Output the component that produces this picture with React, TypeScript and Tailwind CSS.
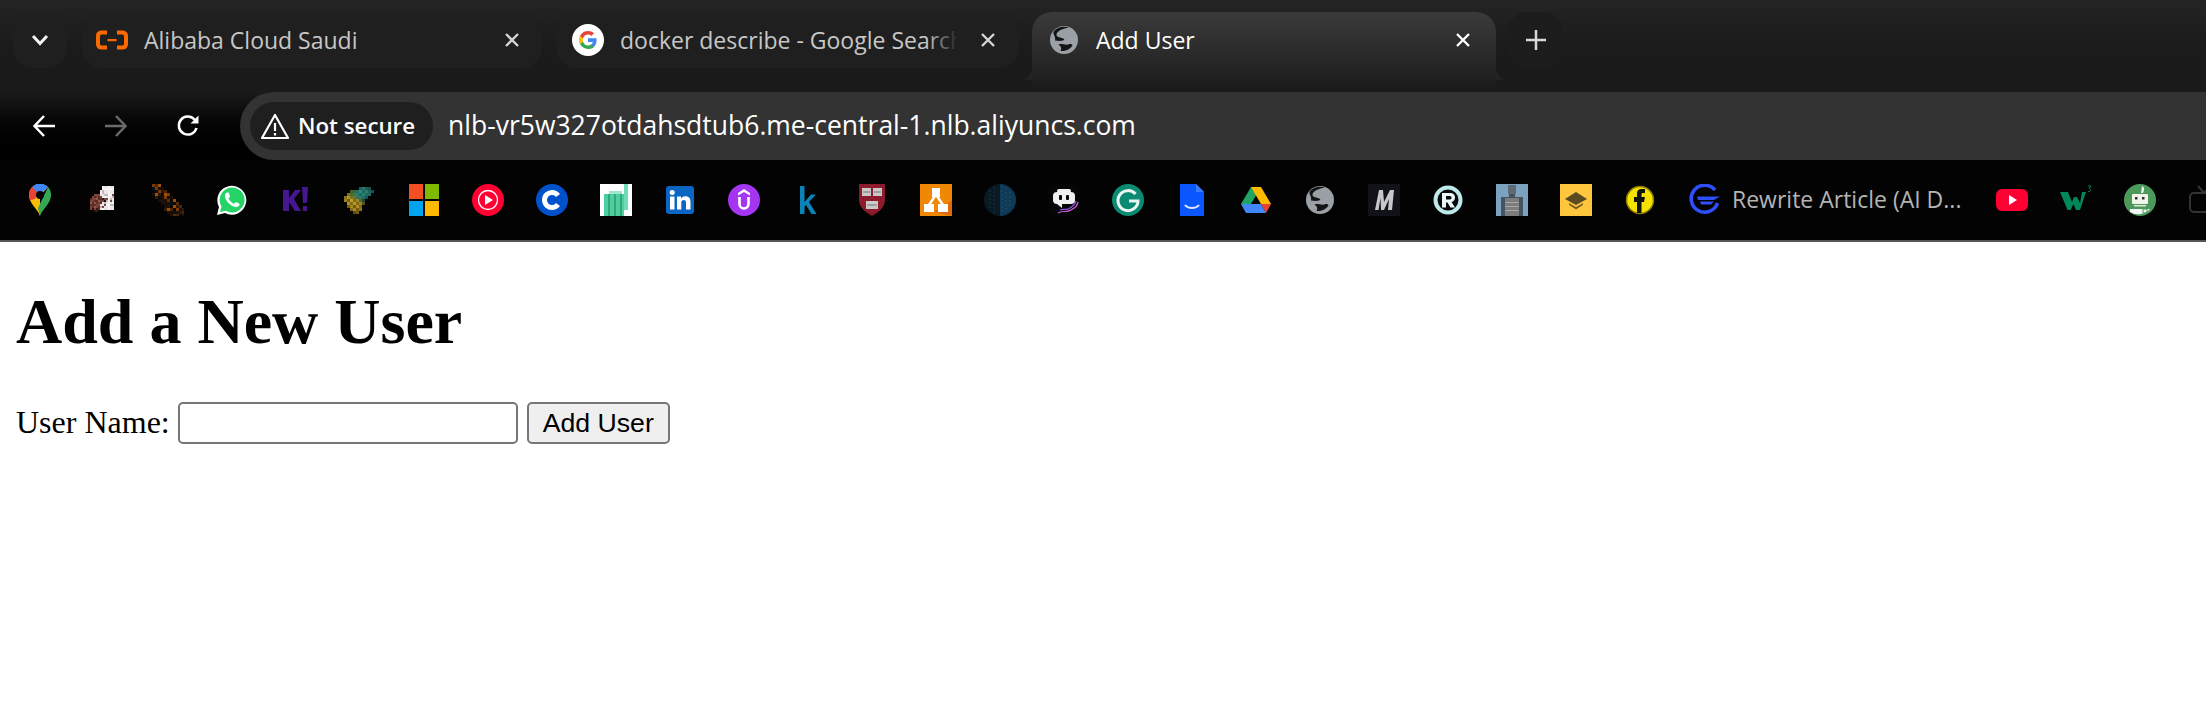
import React from "react";

const ui = { fontFamily: '"Open Sans", "Noto Sans", sans-serif' };

function Close({ color = "#d4d4d4" }: { color?: string }) {
  return (
    <svg width="16" height="16" viewBox="0 0 16 16" className="shrink-0">
      <path d="M2 2 L14 14 M14 2 L2 14" stroke={color} strokeWidth="2.4" fill="none" />
    </svg>
  );
}

function Globe({ size = 28 }: { size?: number }) {
  return (
    <svg width={size} height={size} viewBox="0 0 28 28" className="shrink-0">
      <circle cx="14" cy="14" r="14" fill="#9aa0a6" />
      <path d="M19 1.500 C13 2.500 7 5 6.500 8.500 C6.200 12 12 11 14 13 C15.500 14.500 11 15.500 5 14.500 C6 10 3 9 3.500 6 C6 2 12 -0.500 19 1.500 Z" fill="#141414" />
      <path d="M8.500 18.500 C12 17 15 19.500 18 18.500 C21 17.500 22 18.500 22.500 19.500 C20 23.500 15 25.500 10.500 25 C11.500 23 12 21 8.500 18.500 Z" fill="#141414" />
    </svg>
  );
}

function GoogleG({ size = 32 }: { size?: number }) {
  return (
    <svg width={size} height={size} viewBox="0 0 32 32" className="shrink-0">
      <circle cx="16" cy="16" r="16" fill="#fff" />
      <path d="M24.6 16.2c0-.7-.1-1.3-.2-1.9H16v3.6h4.8c-.2 1.1-.8 2.1-1.8 2.7v2.3h2.9c1.7-1.6 2.7-3.9 2.7-6.7z" fill="#4285F4" />
      <path d="M16 25c2.4 0 4.4-.8 5.9-2.1L19 20.6c-.8.5-1.8.9-3 .9-2.3 0-4.3-1.6-5-3.7H8v2.3C9.5 23 12.5 25 16 25z" fill="#34A853" />
      <path d="M11 17.8c-.2-.5-.3-1.1-.3-1.8s.1-1.2.3-1.8v-2.3H8C7.400 13.100 7 14.500 7 16s.4 2.900 1 4.100l3-2.300z" fill="#FBBC05" />
      <path d="M16 10.600c1.300 0 2.500.5 3.400 1.300l2.600-2.600C20.400 7.900 18.400 7 16 7c-3.500 0-6.500 2-8 4.900l3 2.300c.7-2 2.700-3.600 5-3.600z" fill="#EA4335" />
    </svg>
  );
}

function Alibaba() {
  return (
    <svg width="32" height="20" viewBox="0 0 32 20" className="shrink-0">
      <path d="M11 2.500 H6 Q2 2.500 2 6 V14 Q2 17.500 6 17.500 H11 M21 2.500 H26 Q30 2.500 30 6 V14 Q30 17.500 26 17.500 H21" fill="none" stroke="#ff6a00" strokeWidth="4" />
      <rect x="11.500" y="9" width="9" height="2.200" fill="#ff6a00" />
    </svg>
  );
}

function Px({ cells, size = 32, step = 3 }: { cells: [number, number, string][]; size?: number; step?: number }) {
  return (
    <svg width={size} height={size} viewBox="0 0 32 32" shapeRendering="crispEdges">
      {cells.map(([x, y, c], i) => (
        <rect key={i} x={x} y={y} width={step} height={step} fill={c} />
      ))}
    </svg>
  );
}

const I = ({ children }: { children: React.ReactNode }) => (
  <svg width="32" height="32" viewBox="0 0 32 32">{children}</svg>
);

const maps = (
  <I>
    <path d="M16 32 C14 25 5 20 5 11 A11 11 0 0 1 16 0 L24 3 L16 12Z" fill="#fbbc04" />
    <path d="M8 3 A11 11 0 0 1 24 3 L18 9 H13Z" fill="#4285f4" />
    <path d="M5 11 A11 11 0 0 1 8 3 L14 9 L11 15 L6 16Z" fill="#ea4335" />
    <path d="M24 3 A11 11 0 0 1 27 11 C27 20 18 25 16 32 L14 24 Z" fill="#34a853" />
    <circle cx="16" cy="11" r="4" fill="#050505" />
  </I>
);

const brownCells: [number, number, string][] = [];
for (let y = 2; y < 26; y += 2) {
  for (let x = 2; x < 28; x += 2) {
    const h = (x * 7 + y * 13 + x * y) % 11;
    const inWhite = x >= 12 + Math.max(0, 6 - y) * 0.5 && x < 26 && y < 26;
    const inBrown = x + y * 0.4 >= 7 && x < 18 && y >= 10 && x + y >= 16;
    if (inWhite && !(x < 18 && y > 12 && x + y < 32)) {
      const c = h < 6 ? "#ece6e6" : h < 8 ? "#c9b7b7" : h < 10 ? "#f7f5f5" : "#6e4a46";
      brownCells.push([x, y, c]);
    } else if (inBrown) {
      const c = h < 4 ? "#7d4238" : h < 8 ? "#5c2e26" : "#93594d";
      brownCells.push([x, y, c]);
    }
  }
}
brownCells.push([6, 26, "#2a1410"], [8, 26, "#3a1c16"], [4, 24, "#2a1410"], [8, 24, "#3a1c16"], [14, 14, "#332020"], [16, 16, "#1c1414"]);
const brownPic = <Px step={2} cells={brownCells} />;

const orangeCells: [number, number, string][] = [];
for (let y = 0; y < 33; y += 3) {
  const left = Math.max(0, (y - 6) * 0.8);
  const right = Math.min(33, 9 + y * 0.95);
  for (let x = Math.floor(left / 3) * 3; x < right; x += 3) {
    const h = (((x * 73) ^ (y * 151)) * 31) % 11;
    const c = ["#7a3a08", "#1c0e04", "#4a2406", "#0c0804", "#a0500a", "#18140c", "#301804", "#0a101a", "#5c2c06", "#0c0804", "#1c0e04"][h];
    orangeCells.push([x, y, c]);
  }
}
const orangePic = <Px step={3} cells={orangeCells} />;

const whatsapp = (
  <I>
    <path d="M1 31 L3 23 A14.500 14.500 0 1 1 9 29 Z" fill="#fff" />
    <path d="M4 28 L5.500 22.500 A12.500 12.500 0 1 1 10 26.800 Z" fill="#25d366" />
    <path d="M11 8.500 C9.500 9 8.500 11 9 13 C10 17.500 14.500 22 19.500 23 C21.500 23.300 23.500 22 23.800 20 L20 18 L18 19.800 C15.500 18.800 13.500 16.800 12.500 14.300 L14.200 12.500 L12.500 8.500 Z" fill="#fff" />
  </I>
);

const kahoot = (
  <I>
    <path d="M3 6 H9 V14 L15 6 H21 L14 15 L21 27 H15 L9 18 V27 H3 Z" fill="#46178f" />
    <path d="M22 3 H28 L27 19 H23 Z M23 22 H27 V27 H23 Z" fill="#46178f" />
  </I>
);

const pineapple = (
  <Px step={3} cells={[
    [15,3,"#1b5f5a"],[18,3,"#2a7a70"],[21,3,"#1c5c58"],[24,3,"#1a5550"],
    [6,6,"#405f20"],[9,6,"#2a6a55"],[12,6,"#246a60"],[15,6,"#2c8a7a"],[18,6,"#1f6a60"],[21,6,"#2a8070"],[24,6,"#1e6055"],[27,6,"#17504a"],
    [3,9,"#7a7020"],[6,9,"#506a28"],[9,9,"#3a7a50"],[12,9,"#2a7a68"],[15,9,"#1f6a60"],[18,9,"#2a8070"],[21,9,"#1f6a60"],[24,9,"#226a60"],
    [0,12,"#8a7018"],[3,12,"#b09028"],[6,12,"#7a7020"],[9,12,"#6a7a30"],[12,12,"#3a7050"],[15,12,"#2a7a68"],[18,12,"#1f6a60"],[21,12,"#1a5550"],
    [0,15,"#a08020"],[3,15,"#705a10"],[6,15,"#c0a030"],[9,15,"#806a18"],[12,15,"#a08828"],[15,15,"#4a6a30"],[18,15,"#204a40"],
    [3,18,"#b09028"],[6,18,"#806a18"],[9,18,"#b89828"],[12,18,"#806a18"],[15,18,"#a08020"],[18,18,"#5a5010"],
    [3,21,"#705a10"],[6,21,"#a88a20"],[9,21,"#705a10"],[12,21,"#b09028"],[15,21,"#806a18"],
    [6,24,"#806a18"],[9,24,"#a88a20"],[12,24,"#705a10"],[15,24,"#907818"],
    [9,27,"#604e10"],[12,27,"#705a10"],
  ]} />
);

const microsoft = (
  <svg width="32" height="32" viewBox="0 0 32 32" shapeRendering="crispEdges">
    <rect x="1" y="0" width="14" height="15" fill="#f25022" />
    <rect x="17" y="0" width="14" height="15" fill="#7fba00" />
    <rect x="1" y="17" width="14" height="15" fill="#00a4ef" />
    <rect x="17" y="17" width="14" height="15" fill="#ffb900" />
  </svg>
);

const ytMusic = (
  <I>
    <circle cx="16" cy="16" r="16" fill="#ff0033" />
    <circle cx="16" cy="16" r="9.500" fill="none" stroke="#fff" strokeWidth="1.300" />
    <path d="M13 11 L21 16 L13 21 Z" fill="#fff" />
  </I>
);

const cIcon = (
  <I>
    <circle cx="16" cy="16" r="16" fill="#0052cc" />
    <path d="M22 11.500 A7.500 7.500 0 1 0 22 20.500" fill="none" stroke="#fff" strokeWidth="5" />
  </I>
);

const greenDoc = (
  <svg width="32" height="32" viewBox="0 0 32 32" shapeRendering="crispEdges">
    <rect width="32" height="32" fill="#fff" />
    <rect x="4" y="10" width="20" height="22" fill="#4fcf9f" />
    <rect x="8" y="10" width="2" height="22" fill="#2fa87a" />
    <rect x="14" y="10" width="2" height="22" fill="#2fa87a" />
    <rect x="20" y="10" width="2" height="22" fill="#2fa87a" />
    <rect x="9" y="7" width="13" height="3" fill="#9fe6cb" />
    <rect x="24" y="0" width="4" height="26" fill="#6fdcb4" />
  </svg>
);

const linkedin = (
  <I>
    <rect x="2" y="2" width="28" height="28" rx="3" fill="#0a66c2" />
    <rect x="6" y="12.500" width="4.500" height="13" fill="#fff" />
    <circle cx="8.200" cy="8.500" r="2.500" fill="#fff" />
    <path d="M13 12.500 H17 V14.500 C18 13 19.500 12.200 21.500 12.200 C25 12.200 26.500 14.500 26.500 18 V25.500 H22 V18.800 C22 17 21.300 16 19.800 16 C18.200 16 17.300 17 17.300 18.800 V25.500 H13 Z" fill="#fff" />
  </I>
);

const udemy = (
  <I>
    <circle cx="16" cy="16" r="16" fill="#a435f0" />
    <path d="M10 9 L16 5 L22 9 V11.500 L16 8 L10 11.500 Z" fill="#fff" />
    <path d="M11.500 13 V20 A4.500 4.500 0 0 0 20.500 20 V13" fill="none" stroke="#fff" strokeWidth="2.600" />
  </I>
);

const kIcon = (
  <I>
    <path d="M8 2 H12.500 V18 L19 10.500 H24 L17 18 L24.500 30 H19.500 L14 21 L12.500 22.500 V30 H8 Z" fill="#0a84b8" />
  </I>
);

const harvard = (
  <I>
    <path d="M3 0 H29 V16 C29 24 21 29 16 32 C11 29 3 24 3 16 Z" fill="#8c1c2c" />
    <rect x="6" y="4" width="9" height="8" fill="#c9c9c9" />
    <rect x="17" y="4" width="9" height="8" fill="#c9c9c9" />
    <rect x="10" y="17" width="12" height="8" fill="#c9c9c9" />
    <rect x="7" y="7.500" width="7" height="1" fill="#777" />
    <rect x="18" y="7.500" width="7" height="1" fill="#777" />
    <rect x="11" y="20.500" width="10" height="1" fill="#777" />
  </I>
);

const drawio = (
  <svg width="32" height="32" viewBox="0 0 32 32">
    <rect width="32" height="32" fill="#f08705" />
    <path d="M14 28 L32 32 V16 Z" fill="#df6c0c" />
    <rect x="12" y="4" width="8" height="9" fill="#fff" />
    <rect x="4" y="20" width="10" height="8" fill="#fff" />
    <rect x="18" y="20" width="10" height="8" fill="#fff" />
    <path d="M15 12 L9 21 M17 12 L23 21" stroke="#fff" strokeWidth="2.500" />
  </svg>
);

const darkBall = (
  <svg width="32" height="32" viewBox="0 0 32 32">
    <circle cx="16" cy="16" r="16" fill="#0a1a24" />
    <path d="M16 0 A16 16 0 0 1 16 32 Z" fill="#0f3a55" />
    <path d="M22 4 V28 M26 8 V24 M18 2 V30" stroke="#1c5576" strokeWidth="1" strokeDasharray="2 2" />
    <path d="M6 6 V26 M10 3 V29" stroke="#123040" strokeWidth="1" strokeDasharray="2 2" />
  </svg>
);

const robot = (
  <svg width="32" height="32" viewBox="0 0 32 32">
    <rect width="32" height="32" rx="7" fill="#060608" />
    <path d="M12 26 C16 24 18 27 22 24 S27 21 28 17" fill="none" stroke="#8a4fd8" strokeWidth="1.300" />
    <path d="M10 29 C15 26 18 29 23 26 S29 22 30 18" fill="none" stroke="#d46ae0" strokeWidth="1.100" />
    <rect x="5" y="8" width="22" height="12" rx="4" fill="#f0f0f0" />
    <rect x="9" y="5" width="14" height="4" rx="2" fill="#f0f0f0" />
    <path d="M9 20 H14 V24 Z" fill="#f0f0f0" />
    <rect x="11" y="11" width="3" height="5" rx="1" fill="#060608" />
    <rect x="18" y="11" width="3" height="5" rx="1" fill="#060608" />
  </svg>
);

const grammarly = (
  <I>
    <circle cx="16" cy="16" r="16" fill="#0b8a72" />
    <path d="M23.500 10 A10 10 0 1 0 26 17 H17" fill="none" stroke="#e8f5f2" strokeWidth="3" />
  </I>
);

const blueDoc = (
  <I>
    <path d="M4 0 H20 L28 8 V32 H4 Z" fill="#0b57ff" />
    <path d="M20 0 L28 8 H20 Z" fill="#3b7bff" />
    <path d="M9 21 C12 25 20 25 23 21" fill="none" stroke="#dbe6ff" strokeWidth="2" />
  </I>
);

const drive = (
  <I>
    <path d="M11 3 H21 L11 20 L6 28 L1 20 Z" fill="#1fa463" />
    <path d="M11 3 H21 L31 20 H21 Z" fill="#ffba00" />
    <path d="M1 20 H21 L26 29 H6 Z" fill="#4285f4" />
    <path d="M31 20 L26 29 L21 20 Z" fill="#ea4335" />
  </I>
);

const mIcon = (
  <svg width="32" height="32" viewBox="0 0 32 32">
    <rect width="32" height="32" fill="#12121a" />
    <path d="M7 26 L11 6 H15 L16 18 L22 6 H26 L24 26 H20 L21 15 L16 26 H13 L12.500 14 L10.500 26 Z" fill="#c8c8c8" />
  </svg>
);

const rIcon = (
  <I>
    <circle cx="16" cy="16" r="12.500" fill="#0a0a0a" stroke="#bfeaec" strokeWidth="4" />
    <path d="M10 9 H18 C22 9 23 11.500 23 13.500 C23 16 21.500 17.500 19.500 18 L23 23.500 H18.500 L15.500 18.500 H14 V23.500 H10 Z M14 12 V15.500 H18 C19 15.500 19.500 14.800 19.500 13.800 C19.500 12.800 19 12 18 12 Z" fill="#e8f8f8" />
  </I>
);

const photo = (
  <svg width="32" height="32" viewBox="0 0 32 32" shapeRendering="crispEdges">
    <rect width="32" height="32" fill="#7ba3c0" />
    <rect x="12" y="1" width="8" height="9" fill="#5e6b74" />
    <rect x="13" y="10" width="6" height="3" fill="#4a4f54" />
    <rect x="5" y="13" width="22" height="19" fill="#45545f" />
    <rect x="9" y="14" width="14" height="18" fill="#7c7c7c" />
    <rect x="9" y="18" width="14" height="1" fill="#a8a8a8" />
    <rect x="9" y="22" width="14" height="1" fill="#a8a8a8" />
    <rect x="9" y="26" width="14" height="1" fill="#a8a8a8" />
  </svg>
);

const yellowBox = (
  <svg width="32" height="32" viewBox="0 0 32 32">
    <rect width="32" height="32" fill="#ffc53d" />
    <path d="M16 8 L27 15 L16 21 L5 15 Z" fill="#5a4a20" />
    <path d="M9 19 L16 23 L23 19 V21 L16 25.500 L9 21 Z" fill="#7a6420" />
  </svg>
);

const fbYellow = (
  <I>
    <circle cx="16" cy="16" r="13.500" fill="#f5e200" stroke="#8c7c00" strokeWidth="1.500" />
    <path d="M13 29 V18 H10 V13 H13 V10 C13 6 15 5 18 5 H21 V9 H19 C18 9 17.500 9.500 17.500 10.500 V13 H21 L20 18 H17.500 V29 Z" fill="#111" />
  </I>
);

const blueG = (
  <I>
    <path d="M27 6 A13.500 13.500 0 1 0 29.500 19" fill="none" stroke="#2f4fff" strokeWidth="3.600" />
    <path d="M9 12.500 H32 L26 16 H10 Z M12 17.500 H26 L23 20.500 H13 Z" fill="#2f4fff" />
  </I>
);

const youtube = (
  <svg width="32" height="32" viewBox="0 0 32 32">
    <rect x="0" y="5" width="32" height="22" rx="6" fill="#ff0033" />
    <path d="M13 11 L21 16 L13 21 Z" fill="#fff" />
  </svg>
);

const w3 = (
  <svg width="32" height="32" viewBox="0 0 32 32">
    <path d="M0 8 H8 L12 18 L14 13 H17 L20 19 L22 8 H26 L20 26 H16 L13.500 20 L10.500 26 H7.500 Z" fill="#00875a" />
    <path d="M28 2 H31 L29 4.500 C31.500 4.500 31.500 8 28 7.500" fill="none" stroke="#00875a" strokeWidth="0.900" />
  </svg>
);

const greenBot = (
  <I>
    <circle cx="16" cy="16" r="16" fill="#4b9a5c" />
    <path d="M18 2 C20 3 21 5 19 9 L17 9 Z" fill="#e8f3e8" />
    <rect x="8" y="10" width="16" height="10" rx="1" fill="#f2f6ea" />
    <rect x="11" y="13" width="2.500" height="2.500" fill="#333" />
    <rect x="18" y="13" width="2.500" height="2.500" fill="#333" />
    <rect x="10" y="21" width="12" height="1.500" fill="#dfe8d8" />
    <path d="M6 25 H26 A16 16 0 0 1 6 28 Z" fill="#f5f5f5" />
    <rect x="19" y="25" width="4" height="4" fill="none" stroke="#4b9a5c" />
  </I>
);

const tv = (
  <svg width="32" height="32" viewBox="0 0 32 32">
    <rect x="2" y="9" width="28" height="19" rx="4" fill="none" stroke="#333" strokeWidth="2" />
    <path d="M10 2 L16 9 L22 2" fill="none" stroke="#333" strokeWidth="2" />
  </svg>
);

const globeBm = <Globe size={28} />;

function Slot({ children }: { children: React.ReactNode }) {
  return <div className="w-16 h-8 shrink-0 flex items-center justify-center">{children}</div>;
}

export default function App() {
  const before = [maps, brownPic, orangePic, whatsapp, kahoot, pineapple, microsoft, ytMusic, cIcon, greenDoc, linkedin, udemy, kIcon, harvard, drawio, darkBall, robot, grammarly, blueDoc, drive, globeBm, mIcon, rIcon, photo, yellowBox, fbYellow];
  const after = [youtube, w3, greenBot, tv];
  return (
    <div className="h-screen bg-white flex flex-col overflow-hidden">
      <header style={ui}>
        <div className="h-[92px] bg-gradient-to-b from-[#242424] via-[#1b1b1b] to-[#1a1a1a] flex items-start pt-3">
          <div className="ml-[13px] w-[54px] h-14 rounded-[20px] bg-[#1f1f1f] flex items-center justify-center shrink-0">
            <svg width="18" height="12" viewBox="0 0 18 12"><path d="M2 2 L9 9.500 L16 2" fill="none" stroke="#f2f2f2" strokeWidth="3" /></svg>
          </div>
          <div className="ml-[15px] w-[460px] h-14 rounded-[20px] bg-[#1f1f1f] flex items-center pl-[14px] pr-[22px] shrink-0">
            <Alibaba />
            <span className="ml-4 text-[#c7c7c7] text-[23px] flex-1 whitespace-nowrap overflow-hidden">Alibaba Cloud Saudi</span>
            <Close />
          </div>
          <div className="ml-[14px] w-[463px] h-14 rounded-[20px] bg-[#1f1f1f] flex items-center pl-[16px] pr-[23px] shrink-0">
            <GoogleG />
            <div className="relative ml-4 mr-[22px] flex-1 w-0 overflow-hidden">
              <span className="block text-[#c7c7c7] text-[23px] whitespace-nowrap">docker describe - Google Search</span>
              <div className="absolute right-0 top-0 bottom-0 w-8 bg-gradient-to-r from-transparent to-[#1f1f1f]" />
            </div>
            <Close />
          </div>
          <div className="relative ml-[13px] w-[464px] h-20 rounded-t-[20px] bg-gradient-to-b from-[#3a3a3a] via-[#2b2b2b] to-[#1a1a1a] flex items-start shrink-0 pl-[18px] pr-[25px] pt-[14px]">
            <svg className="absolute -left-3 bottom-3" width="12" height="14" viewBox="0 0 12 14"><path d="M12 0 V14 H0 Q12 12 12 0 Z" fill="#232323" /></svg>
            <svg className="absolute -right-3 bottom-3" width="12" height="14" viewBox="0 0 12 14"><path d="M0 0 V14 H12 Q0 12 0 0 Z" fill="#232323" /></svg>
            <Globe />
            <span className="ml-[18px] text-white text-[23px] leading-7 flex-1">Add User</span>
            <div className="mt-[6px]"><Close color="#ffffff" /></div>
          </div>
          <div className="ml-3 w-[55px] h-14 rounded-[20px] bg-[#1c1c1c] flex items-center justify-center shrink-0">
            <svg width="20" height="20" viewBox="0 0 20 20"><path d="M10 0 V20 M0 10 H20" stroke="#d8d8d8" strokeWidth="2.500" /></svg>
          </div>
        </div>
        <div className="h-[68px] bg-gradient-to-b from-[#1a1a1a] to-[#000000] flex items-center">
          <div className="w-[240px] flex items-center shrink-0 pl-[32px] gap-[48px]">
            <svg width="24" height="24" viewBox="0 0 24 24"><path d="M23 12 H3 M12 2 L2.500 12 L12 22" fill="none" stroke="#fff" strokeWidth="2.500" /></svg>
            <svg width="24" height="24" viewBox="0 0 24 24"><path d="M1 12 H21 M12 2 L21.500 12 L12 22" fill="none" stroke="#6b6b6b" strokeWidth="2.500" /></svg>
            <svg width="24" height="24" viewBox="0 0 24 24"><path d="M20.500 14 A9 9 0 1 1 18.500 5.500 L21 8" fill="none" stroke="#fff" strokeWidth="2.500" /><path d="M22.500 1.500 V9.500 H14.500 Z" fill="#fff" /></svg>
          </div>
          <div className="flex-1 h-[68px] bg-[#333333] rounded-l-[34px] flex items-center pl-[10px]">
            <div className="w-[183px] h-12 rounded-3xl bg-[#1f1f1f] flex items-center pl-[10px] shrink-0">
              <svg width="30" height="28" viewBox="0 0 30 28"><path d="M15 3 L28 26 H2 Z" fill="none" stroke="#fff" strokeWidth="2.200" strokeLinejoin="round" /><path d="M15 11 V19 M15 21 V23.500" stroke="#fff" strokeWidth="2.200" /></svg>
              <span className="ml-2 text-white font-semibold text-[22.3px] whitespace-nowrap">Not secure</span>
            </div>
            <span className="ml-[15px] text-white text-[26.5px] whitespace-nowrap">nlb-vr5w327otdahsdtub6.me-central-1.nlb.aliyuncs.com</span>
          </div>
        </div>
        <div className="h-[82px] bg-[#030303] border-b-2 border-[#555555] flex items-start pt-6 pl-2 overflow-hidden">
          {before.map((b, i) => <Slot key={i}>{b}</Slot>)}
          <div className="shrink-0 flex items-center h-8">
            <div className="w-16 flex justify-center">{blueG}</div>
            <span className="-ml-[4px] -mt-[2px] text-[#b4b4b4] text-[23px] whitespace-nowrap w-[248px]">Rewrite Article (AI D...</span>
          </div>
          {after.map((b, i) => <Slot key={i}>{b}</Slot>)}
        </div>
      </header>
      <main className="px-4 text-black text-[32px]" style={{ fontFamily: '"Liberation Serif", serif' }}>
        <h1 className="text-[64px] font-bold my-[43px] leading-[74px]">Add a New User</h1>
        <form className="flex items-center gap-2 h-[42px]">
          <label className="leading-[36px] -mt-[3px]">User Name:</label>
          <input type="text" className="w-[340px] h-[42px] border-2 border-[#767676] rounded-[5px] bg-white" />
          <button type="button" className="ml-px w-[143px] h-[42px] border-2 border-[#767676] rounded-[5px] bg-[#efefef] text-[26.67px] leading-none" style={{ fontFamily: '"Liberation Sans", sans-serif' }}>Add User</button>
        </form>
      </main>
    </div>
  );
}
